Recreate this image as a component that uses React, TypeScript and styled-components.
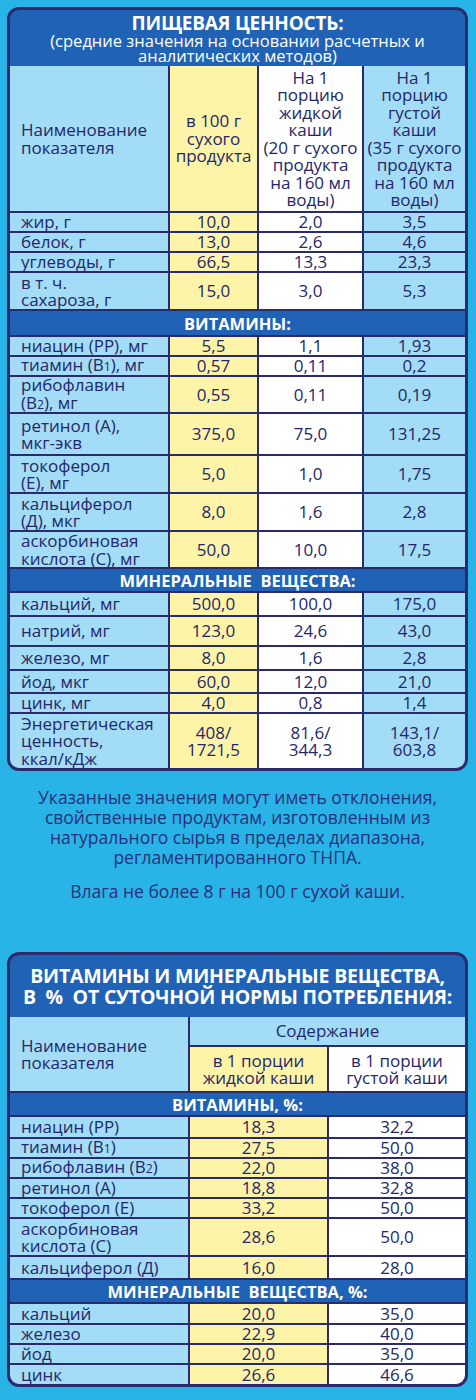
import styled, { createGlobalStyle } from "styled-components";

type Tone = "blue" | "yellow" | "white";

type Row =
  | { kind: "band"; title: string; h: number }
  | { kind: "data"; name: React.ReactNode; values: React.ReactNode[]; h: number };

const NAVY = "#2a2b6d";
const TEXT = "#24276a";

const tones: Record<Tone, string> = {
  blue: "#a3dcf6",
  yellow: "#fdf4a8",
  white: "#ffffff",
};

const GlobalStyle = createGlobalStyle`
  body {
    margin: 0;
    background: #29b4e8;
    font-family: "Open Sans", "Noto Sans", sans-serif;
  }
`;

const Sub = styled.span`
  font-size: 0.72em;
`;

const nutritionRows: Row[] = [
  { kind: "data", name: "жир, г", values: ["10,0", "2,0", "3,5"], h: 18 },
  { kind: "data", name: "белок, г", values: ["13,0", "2,6", "4,6"], h: 18 },
  { kind: "data", name: "углеводы, г", values: ["66,5", "13,3", "23,3"], h: 18 },
  { kind: "data", name: <>в т. ч.<br />сахароза, г</>, values: ["15,0", "3,0", "5,3"], h: 36 },
  { kind: "band", title: "ВИТАМИНЫ:", h: 24 },
  { kind: "data", name: "ниацин (РР), мг", values: ["5,5", "1,1", "1,93"], h: 18 },
  { kind: "data", name: <>тиамин (В<Sub>1</Sub>), мг</>, values: ["0,57", "0,11", "0,2"], h: 18 },
  { kind: "data", name: <>рибофлавин<br />(В<Sub>2</Sub>), мг</>, values: ["0,55", "0,11", "0,19"], h: 35 },
  { kind: "data", name: <>ретинол (А),<br />мкг-экв</>, values: ["375,0", "75,0", "131,25"], h: 40 },
  { kind: "data", name: <>токоферол<br />(Е), мг</>, values: ["5,0", "1,0", "1,75"], h: 36 },
  { kind: "data", name: <>кальциферол<br />(Д), мкг</>, values: ["8,0", "1,6", "2,8"], h: 36 },
  { kind: "data", name: <>аскорбиновая<br />кислота (С), мг</>, values: ["50,0", "10,0", "17,5"], h: 35 },
  { kind: "band", title: "МИНЕРАЛЬНЫЕ\u00a0\u00a0ВЕЩЕСТВА:", h: 22 },
  { kind: "data", name: "кальций, мг", values: ["500,0", "100,0", "175,0"], h: 22 },
  { kind: "data", name: "натрий, мг", values: ["123,0", "24,6", "43,0"], h: 28 },
  { kind: "data", name: "железо, мг", values: ["8,0", "1,6", "2,8"], h: 22 },
  { kind: "data", name: "йод, мкг", values: ["60,0", "12,0", "21,0"], h: 21 },
  { kind: "data", name: "цинк, мг", values: ["4,0", "0,8", "1,4"], h: 18 },
  {
    kind: "data",
    name: <>Энергетическая<br />ценность,<br />ккал/кДж</>,
    values: [<>408/<br />1721,5</>, <>81,6/<br />344,3</>, <>143,1/<br />603,8</>],
    h: 54,
  },
];

const dailyRows: Row[] = [
  { kind: "band", title: "ВИТАМИНЫ, %:", h: 22 },
  { kind: "data", name: "ниацин (РР)", values: ["18,3", "32,2"], h: 20 },
  { kind: "data", name: <>тиамин (В<Sub>1</Sub>)</>, values: ["27,5", "50,0"], h: 18 },
  { kind: "data", name: <>рибофлавин (В<Sub>2</Sub>)</>, values: ["22,0", "38,0"], h: 18 },
  { kind: "data", name: "ретинол (А)", values: ["18,8", "32,8"], h: 18 },
  { kind: "data", name: "токоферол (Е)", values: ["33,2", "50,0"], h: 18 },
  { kind: "data", name: <>аскорбиновая<br />кислота (С)</>, values: ["28,6", "50,0"], h: 36 },
  { kind: "data", name: "кальциферол (Д)", values: ["16,0", "28,0"], h: 21 },
  { kind: "band", title: "МИНЕРАЛЬНЫЕ\u00a0\u00a0ВЕЩЕСТВА, %:", h: 22 },
  { kind: "data", name: "кальций", values: ["20,0", "35,0"], h: 19 },
  { kind: "data", name: "железо", values: ["22,9", "40,0"], h: 18 },
  { kind: "data", name: "йод", values: ["20,0", "35,0"], h: 18 },
  { kind: "data", name: "цинк", values: ["26,6", "46,6"], h: 19 },
];

const TableRows = ({ rows, tones: colTones }: { rows: Row[]; tones: Tone[] }) => (
  <>
    {rows.map((row, i) =>
      row.kind === "band" ? (
        <Band key={i}>{row.title}</Band>
      ) : (
        <Line key={i}>
          <Cell $tone="blue" $left>
            <span>{row.name}</span>
          </Cell>
          {row.values.map((v, j) => (
            <Cell key={j} $tone={colTones[j]}>
              <span>{v}</span>
            </Cell>
          ))}
        </Line>
      )
    )}
  </>
);

const App = () => {
  const rows1 = ["145px", ...nutritionRows.map((r) => `${r.h}px`)].join(" ");
  const rows2 = ["28px", "44px", ...dailyRows.map((r) => `${r.h}px`)].join(" ");

  return (
    <Page>
      <GlobalStyle />
      <Card>
        <CardHeader $h={56}>
          <Title $size={19}>ПИЩЕВАЯ ЦЕННОСТЬ:</Title>
          <Subtitle>
            (средние значения на основании расчетных и<br />аналитических методов)
          </Subtitle>
        </CardHeader>
        <Grid $cols="158px 87px 103px 101px" $rows={rows1}>
          <Cell $tone="blue" $left>
            <span>
              Наименование
              <br />
              показателя
            </span>
          </Cell>
          <Cell $tone="yellow">
            <span>
              в 100 г<br />сухого<br />продукта
            </span>
          </Cell>
          <Cell $tone="white">
            <span>
              На 1<br />порцию<br />жидкой<br />каши<br />(20 г сухого<br />продукта<br />на 160 мл<br />воды)
            </span>
          </Cell>
          <Cell $tone="blue">
            <span>
              На 1<br />порцию<br />густой<br />каши<br />(35 г сухого<br />продукта<br />на 160 мл<br />воды)
            </span>
          </Cell>
          <TableRows rows={nutritionRows} tones={["yellow", "white", "blue"]} />
        </Grid>
      </Card>

      <Notes>
        <p>
          Указанные значения могут иметь отклонения,
          <br />
          свойственные продуктам, изготовленным из
          <br />
          натурального сырья в пределах диапазона,
          <br />
          регламентированного ТНПА.
        </p>
        <p>Влага не более 8 г на 100 г сухой каши.</p>
      </Notes>

      <Card>
        <CardHeader $h={62}>
          <Title $size={19.5}>
            ВИТАМИНЫ И МИНЕРАЛЬНЫЕ ВЕЩЕСТВА,
            <br />В&nbsp;&nbsp;%&nbsp;&nbsp;ОТ СУТОЧНОЙ НОРМЫ ПОТРЕБЛЕНИЯ:
          </Title>
        </CardHeader>
        <Grid $cols="178px 137px 136px" $rows={rows2}>
          <NameHead $tone="blue" $left>
            <span>
              Наименование
              <br />
              показателя
            </span>
          </NameHead>
          <SpanHead $tone="blue">
            <span>Содержание</span>
          </SpanHead>
          <Cell $tone="yellow">
            <span>
              в 1 порции
              <br />
              жидкой каши
            </span>
          </Cell>
          <Cell $tone="white">
            <span>
              в 1 порции
              <br />
              густой каши
            </span>
          </Cell>
          <TableRows rows={dailyRows} tones={["yellow", "white"]} />
        </Grid>
      </Card>
    </Page>
  );
};

const Page = styled.main`
  display: flex;
  flex-direction: column;
  padding: 7px 8px 10px 7px;
  color: ${TEXT};
`;

const Card = styled.section`
  border: 3px solid ${NAVY};
  border-radius: 12px;
  overflow: hidden;
  background: ${NAVY};
`;

const CardHeader = styled.header<{ $h: number }>`
  display: flex;
  flex-direction: column;
  justify-content: center;
  align-items: center;
  height: ${(p) => p.$h}px;
  background: #1f62b6;
  color: #fff;
  text-align: center;
`;

const Title = styled.h2<{ $size: number }>`
  margin: 0;
  font-size: ${(p) => p.$size}px;
  font-weight: 700;
  line-height: 21px;
  letter-spacing: -0.2px;
`;

const Subtitle = styled.div`
  font-size: 16.5px;
  line-height: 14.5px;
`;

const Grid = styled.div<{ $cols: string; $rows: string }>`
  display: grid;
  grid-template-columns: ${(p) => p.$cols};
  grid-template-rows: ${(p) => p.$rows};
  gap: 2px;
  background: ${NAVY};
`;

const Line = styled.div`
  display: contents;
`;

const Cell = styled.div<{ $tone: Tone; $left?: boolean }>`
  display: flex;
  align-items: center;
  justify-content: ${(p) => (p.$left ? "flex-start" : "center")};
  padding: ${(p) => (p.$left ? "0 4px 0 11px" : "0")};
  background: ${(p) => tones[p.$tone]};
  font-size: 17px;
  font-weight: 500;
  line-height: 17.5px;
  text-align: ${(p) => (p.$left ? "left" : "center")};
  white-space: nowrap;
`;

const NameHead = styled(Cell)`
  grid-row: span 2;
`;

const SpanHead = styled(Cell)`
  grid-column: span 2;
`;

const Band = styled.div`
  grid-column: 1 / -1;
  display: flex;
  align-items: center;
  justify-content: center;
  background: #1f62b6;
  color: #fff;
  font-size: 16.5px;
  font-weight: 700;
`;

const Notes = styled.div`
  display: flex;
  flex-direction: column;
  gap: 14px;
  margin: 16px 0 51px;
  text-align: center;
  font-size: 17.5px;
  line-height: 20px;
  color: #2a2f7b;

  p {
    margin: 0;
  }
`;

export default App;
